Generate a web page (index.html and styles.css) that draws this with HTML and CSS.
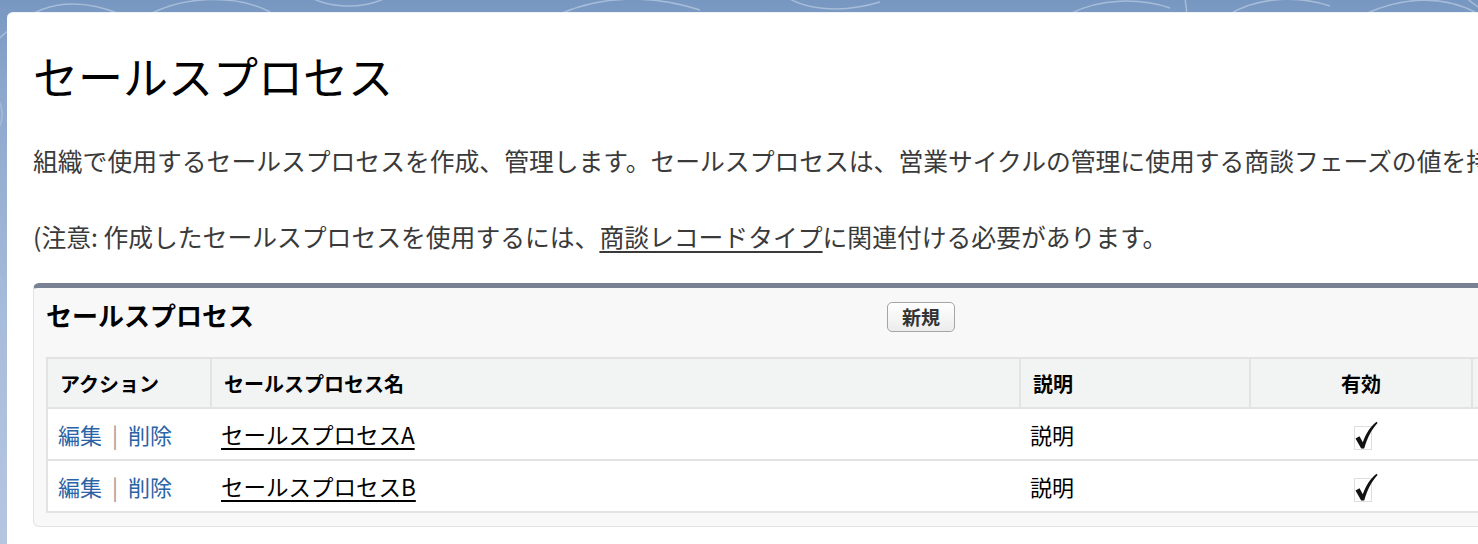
FILE: index.html
```html
<!DOCTYPE html>
<html lang="ja">
<head>
    <meta charset="UTF-8">
    <title>セールスプロセス</title>
    <link rel="stylesheet" href="styles.css">
</head>
<body>
    <svg class="bg-swirl" width="1478" height="544" viewBox="0 0 1478 544" aria-hidden="true">
        <path d="M-20 60 C 20 10, 60 -10, 120 14" />
        <path d="M150 14 C 190 -6, 240 -4, 270 12" />
        <path d="M300 -10 C 320 8, 360 12, 390 -4" />
        <path d="M560 14 C 600 -4, 650 -6, 700 10" />
        <path d="M780 -8 C 800 10, 840 14, 880 2" />
        <path d="M1070 14 C 1100 -2, 1140 -2, 1170 8" />
        <path d="M1185 -6 C 1185 6, 1188 12, 1186 14" />
        <path d="M1230 14 C 1260 -4, 1300 -4, 1330 6" />
        <path d="M1365 14 C 1400 -2, 1440 -6, 1475 12" />
        <path d="M1460 -8 C 1470 2, 1478 8, 1490 14" />
        <path d="M-10 140 C 10 120, 2 100, -10 90" />
        <path d="M-10 320 C 8 300, 6 280, -10 260" />
    </svg>
    <div class="page">
        <div class="card">
            <h1 class="page-title">セールスプロセス</h1>
            <p class="intro">組織で使用するセールスプロセスを作成、管理します。セールスプロセスは、営業サイクルの管理に使用する商談フェーズの値を持つピックリストです。</p>
            <p class="intro">(注意: 作成したセールスプロセスを使用するには、<a href="#" class="intro-link">商談レコードタイプ</a>に関連付ける必要があります。</p>

            <div class="panel">
                <div class="panel-header">
                    <h2 class="panel-title">セールスプロセス</h2>
                    <button class="btn">新規</button>
                </div>
                <table class="list">
                    <thead>
                        <tr>
                            <th class="col-action">アクション</th>
                            <th class="col-name">セールスプロセス名</th>
                            <th class="col-desc">説明</th>
                            <th class="col-active">有効</th>
                            <th class="col-rest"></th>
                        </tr>
                    </thead>
                    <tbody>
                        <tr>
                            <td><a href="#" class="action">編集</a><span class="sep">|</span><a href="#" class="action">削除</a></td>
                            <td><a href="#" class="name-link">セールスプロセスA</a></td>
                            <td>説明</td>
                            <td class="center">
                                <svg class="check" width="26" height="30" viewBox="0 0 26 30">
                                    <rect x="1.5" y="5.5" width="17" height="23" class="check-box" />
                                    <path d="M2.5 17.5 L6.5 15.2 L9.8 21.2 C12.8 13 17 6 23.5 0.8 L24.6 2 C18.5 8.5 14.5 16.5 11.2 27.5 L8.2 27.5 Z" />
                                </svg>
                            </td>
                            <td></td>
                        </tr>
                        <tr>
                            <td><a href="#" class="action">編集</a><span class="sep">|</span><a href="#" class="action">削除</a></td>
                            <td><a href="#" class="name-link">セールスプロセスB</a></td>
                            <td>説明</td>
                            <td class="center">
                                <svg class="check" width="26" height="30" viewBox="0 0 26 30">
                                    <rect x="1.5" y="5.5" width="17" height="23" class="check-box" />
                                    <path d="M2.5 17.5 L6.5 15.2 L9.8 21.2 C12.8 13 17 6 23.5 0.8 L24.6 2 C18.5 8.5 14.5 16.5 11.2 27.5 L8.2 27.5 Z" />
                                </svg>
                            </td>
                            <td></td>
                        </tr>
                    </tbody>
                </table>
            </div>
        </div>
    </div>
</body>
</html>
```

FILE: styles.css
```css
html, body {
    margin: 0;
    padding: 0;
    height: 544px;
    overflow: hidden;
}

body {
    font-family: "Noto Sans CJK JP", "Noto Sans", sans-serif;
    color: #333;
    background: linear-gradient(180deg, #7797c1 0, #8ba6cc 80px, #a8bcdb 320px, #b5c6e1 544px);
    position: relative;
}

.bg-swirl {
    position: absolute;
    top: 0;
    left: 0;
    z-index: 0;
}

.bg-swirl path {
    fill: none;
    stroke: #a6bcd9;
    stroke-width: 1.5;
}

.page {
    position: relative;
    z-index: 1;
    padding: 12px 0 0 7px;
}

.card {
    width: 1471px;
    height: 532px;
    background: #fff;
    border-top: 1px solid #eef1f5;
    border-radius: 6px 0 0 0;
    padding: 0 0 0 26px;
    box-sizing: border-box;
    overflow: hidden;
}

.page-title {
    margin: 36px 0 0 0;
    font-size: 45px;
    font-weight: 400;
    line-height: 54px;
    color: #000;
}

.intro {
    margin: 39px 0 0 0;
    font-size: 24.8px;
    line-height: 36px;
    color: #3a3a3a;
    white-space: nowrap;
}

.intro + .intro {
    margin-top: 40px;
}

.intro-link {
    color: #3a3a3a;
    text-decoration: underline;
    text-underline-offset: 4px;
}

/* panel */
.panel {
    margin-top: 29px;
    width: 1700px;
    background: #f8f8f8;
    border: 1px solid #e2e2e2;
    border-top: 5px solid #788194;
    border-radius: 6px;
    padding: 0 12px 13px 12px;
}

.panel-header {
    display: flex;
    align-items: center;
    height: 54px;
    margin-bottom: 15px;
}

.panel-title {
    flex: 0 0 841px;
    margin: 0;
    font-size: 26px;
    font-weight: 700;
    color: #000;
    line-height: 30px;
}

.btn {
    margin-top: 4px;
    font-family: inherit;
    font-size: 19px;
    font-weight: 700;
    color: #333;
    height: 30px;
    width: 68px;
    padding: 0;
    line-height: 26px;
    background: linear-gradient(180deg, #ffffff, #ececec);
    border: 1px solid #a5a5a5;
    border-radius: 5px;
}

/* list table */
.list {
    border-collapse: collapse;
    width: 1640px;
    background: #fff;
    border: 2px solid #e3e3e3;
    table-layout: fixed;
}

.list th {
    box-sizing: border-box;
    background: #f2f3f3;
    font-size: 20px;
    font-weight: 700;
    color: #000;
    text-align: left;
    height: 50px;
    padding: 0 0 0 12px;
    border-right: 2px solid #e3e3e3;
    border-bottom: 2px solid #e3e3e3;
}

.list th.col-active {
    text-align: center;
    padding: 0;
}

.col-action { width: 164px; }
.col-name { width: 809px; }
.col-desc { width: 230px; }
.col-active { width: 222px; }

.list td {
    font-size: 22px;
    color: #000;
    height: 50px;
    padding: 0 0 0 10px;
    border-bottom: 2px solid #e3e3e3;
    vertical-align: middle;
}

.list td.center {
    text-align: center;
    padding: 0;
}

.action {
    color: #2b63a6;
    text-decoration: none;
}

.sep {
    color: #9a9a9a;
    margin: 0 10px 0 10px;
}

.name-link {
    color: #000;
    font-size: 22.5px;
    text-decoration: underline;
    text-decoration-thickness: 2px;
    text-underline-offset: 4px;
}

.check {
    display: inline-block;
    vertical-align: middle;
    margin: -4px 0 0 10px;
}

.check path {
    fill: #111;
}

.check-box {
    fill: none;
    stroke: #bdbdbd;
    stroke-width: 1;
    stroke-dasharray: 1 1;
}
```
